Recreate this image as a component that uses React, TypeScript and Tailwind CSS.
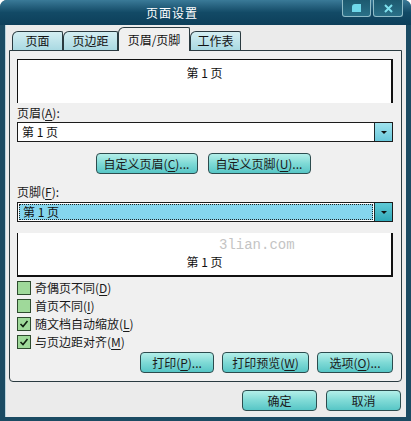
import React from 'react';

const font = { fontFamily: '"Noto Sans CJK SC", "Noto Sans", sans-serif' };

const U: React.FC<{ children: React.ReactNode }> = ({ children }) => (
  <span className="underline underline-offset-2">{children}</span>
);

const Btn: React.FC<{ w: string; children: React.ReactNode }> = ({ w, children }) => (
  <div
    className={`${w} h-[21px] flex items-center justify-center rounded-[4px] border border-[#2c4c4e] bg-gradient-to-b from-[#b3efe9] via-[#7fdad6] to-[#56c6c6] text-[12px] text-[#1a1a1a] leading-none`}
  >
    {children}
  </div>
);

const Arrow: React.FC<{ dark?: boolean }> = ({ dark }) => (
  <div
    className={`w-[18px] h-full flex items-center justify-center border-l border-[#1c2a2c] ${
      dark ? 'bg-gradient-to-b from-[#5fcad6] to-[#2fa9b9]' : 'bg-gradient-to-b from-[#9fe3ee] to-[#69c8db]'
    }`}
  >
    <div className="w-0 h-0 border-l-[3px] border-r-[3px] border-t-[3px] border-l-transparent border-r-transparent border-t-[#111]" />
  </div>
);

const Check: React.FC<{ checked?: boolean; children: React.ReactNode }> = ({ checked, children }) => (
  <div className="h-[18px] flex items-center">
    <div className="w-[14px] h-[14px] bg-[#9fd99a] border border-[#2e4b2e] flex items-center justify-center">
      {checked && (
        <svg width="10" height="10" viewBox="0 0 10 10">
          <path d="M1.5 5 L4 7.5 L8.5 2" stroke="#102010" strokeWidth="1.6" fill="none" />
        </svg>
      )}
    </div>
    <span className="ml-[4px] text-[12px] text-[#1a1a1a]">{children}</span>
  </div>
);

const Tab: React.FC<{ w: string; active?: boolean; children: React.ReactNode }> = ({ w, active, children }) =>
  active ? (
    <div
      className={`${w} h-[24px] -mb-px z-10 flex items-center justify-center rounded-tl-[6px] rounded-tr-[2px] border border-b-0 border-[#2a3a40] bg-[#f0f0f0] text-[12px] text-[#111]`}
    >
      {children}
    </div>
  ) : (
    <div
      className={`${w} h-[19px] flex items-center justify-center rounded-tl-[6px] rounded-tr-[2px] border border-b-0 border-[#2a3a40] bg-gradient-to-b from-[#d4eef2] to-[#a9d9e2] text-[12px] text-[#111]`}
    >
      {children}
    </div>
  );

export default function App() {
  return (
    <div style={font} className="w-[411px] h-[421px] bg-white">
      <div className="w-[411px] h-[421px] flex flex-col rounded-t-[7px] bg-[#1b4b63] overflow-hidden">
        {/* title bar */}
        <div className="h-[25px] flex items-start bg-gradient-to-b from-[#3a7a98] via-[#124a66] to-[#0d3f5a]">
          <span className="ml-[146px] mt-[4px] text-[12px] text-white tracking-[1px]">页面设置</span>
          <div className="ml-auto mr-[8px] flex gap-[2px]">
            <div className="w-[29px] h-[17px] rounded-b-[3px] border border-t-0 border-[#8fbcc8] bg-gradient-to-b from-[#1d5a70] to-[#2a7088] flex items-center justify-center">
              <div className="w-[9px] h-[8px] bg-[#6fd8ea] rounded-tl-[3px]" />
            </div>
            <div className="w-[30px] h-[17px] rounded-b-[3px] border border-t-0 border-[#8fbcc8] bg-gradient-to-b from-[#1d5a70] to-[#2a7088] flex items-center justify-center">
              <svg width="9" height="9" viewBox="0 0 9 9">
                <path d="M1 1 L8 8 M8 1 L1 8" stroke="#7fe0ee" strokeWidth="2" />
              </svg>
            </div>
          </div>
        </div>

        {/* body */}
        <div className="flex-1 mx-[5px] mb-[4px] bg-[#ebebeb] border-l border-[#b9d3dd] flex flex-col pl-[3px] pr-[4px]">
          {/* tabs */}
          <div className="ml-[3px] h-[25px] flex items-end gap-0">
            <Tab w="w-[51px]">页面</Tab>
            <Tab w="w-[55px]">页边距</Tab>
            <Tab w="w-[72px]" active>
              页眉/页脚
            </Tab>
            <Tab w="w-[51px]">工作表</Tab>
          </div>

          {/* panel */}
          <div className="h-[332px] border border-[#2a3a40] rounded-b-[4px] bg-[#f0f0f0] flex flex-col pl-[7px] pr-[8px] pt-[8px]">
            <div className="h-[44px] bg-white border-t border-l border-r-2 border-[#111] flex justify-center">
              <span className="mt-[4px] text-[12px] text-[#111]">第 1 页</span>
            </div>

            <div className="mt-[2px] h-[16px] flex items-center text-[12px] text-[#1a1a1a]">
              页眉(<U>A</U>):
            </div>
            <div className="mt-[1px] h-[20px] flex bg-white border border-[#1c1c1c]">
              <span className="flex-1 pl-[4px] text-[12px] leading-[18px] text-[#111]">第 1 页</span>
              <Arrow />
            </div>

            <div className="mt-[11px] flex justify-center gap-[10px] pr-[4px]">
              <Btn w="w-[102px]">
                自定义页眉(<U>C</U>)...
              </Btn>
              <Btn w="w-[103px]">
                自定义页脚(<U>U</U>)...
              </Btn>
            </div>

            <div className="mt-[10px] h-[16px] flex items-center text-[12px] text-[#1a1a1a]">
              页脚(<U>F</U>):
            </div>
            <div className="mt-[2px] h-[20px] flex bg-white border border-[#1c1c1c]">
              <div className="flex-1 m-[1px] bg-[#85d6ee] border border-dotted border-[#222] flex items-center">
                <span className="pl-[3px] text-[12px] text-[#111]">第 1 页</span>
              </div>
              <Arrow dark />
            </div>

            <div className="mt-[11px] h-[44px] bg-white border-l border-r-2 border-b-2 border-[#111] flex flex-col">
              <span
                className="ml-[201px] mt-[4px] text-[14px] leading-[16px] text-[#c4c4c4]"
                style={{ fontFamily: '"Liberation Mono", monospace' }}
              >
                3lian.com
              </span>
              <span className="self-center mt-[1px] text-[12px] leading-[16px] text-[#111]">第 1 页</span>
            </div>

            <div className="mt-[2px] flex flex-col">
              <Check>
                奇偶页不同(<U>D</U>)
              </Check>
              <Check>
                首页不同(<U>I</U>)
              </Check>
              <Check checked>
                随文档自动缩放(<U>L</U>)
              </Check>
              <Check checked>
                与页边距对齐(<U>M</U>)
              </Check>
            </div>

            <div className="mt-[1px] flex justify-end gap-[8px]">
              <Btn w="w-[74px]">
                打印(<U>P</U>)...
              </Btn>
              <Btn w="w-[87px]">
                打印预览(<U>W</U>)
              </Btn>
              <Btn w="w-[76px]">
                选项(<U>O</U>)...
              </Btn>
            </div>
          </div>

          {/* ok / cancel */}
          <div className="mt-[8px] flex justify-end gap-[9px] pr-[1px]">
            <Btn w="w-[75px]">确定</Btn>
            <Btn w="w-[75px]">取消</Btn>
          </div>
        </div>
      </div>
    </div>
  );
}
